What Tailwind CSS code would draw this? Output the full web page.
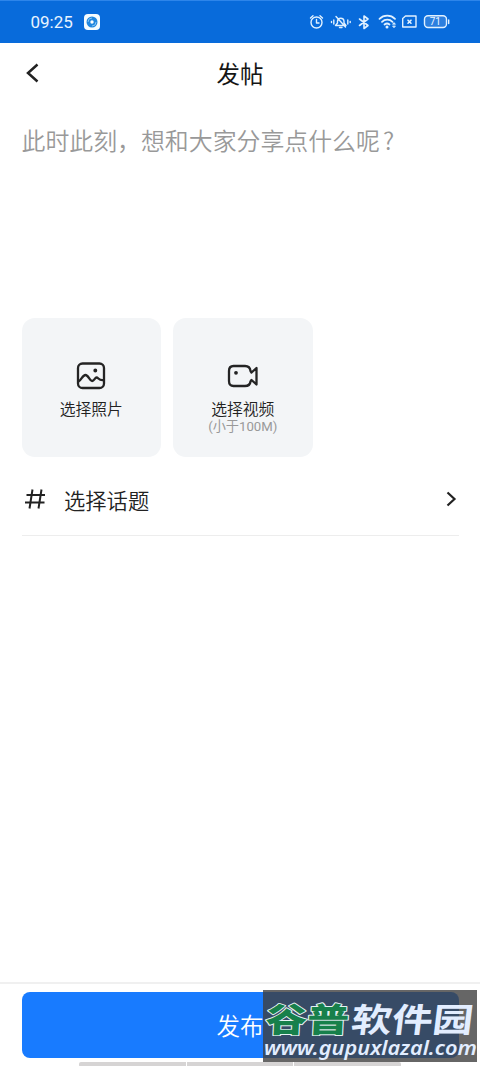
<!DOCTYPE html>
<html lang="zh-CN">
<head>
<meta charset="utf-8">
<title>发帖</title>
<script src="https://cdn.jsdelivr.net/npm/@tailwindcss/browser@4"></script>
</head>
<body class="bg-white">
<div class="relative flex h-[1066px] w-[480px] flex-col overflow-hidden bg-white font-['Noto_Sans_CJK_SC',sans-serif] text-[#222]">
  <!-- Status bar -->
  <div class="flex h-[42.500px] shrink-0 items-center border-t border-[#2d85ea] bg-[#086bdb] px-[30.500px] text-white">
    <span class="w-[53.500px] font-[Roboto,sans-serif] text-[17px] leading-[20px] text-[#e8f4ff]">09:25</span>
    <svg class="h-4 w-4" viewBox="0 0 16 16"><rect width="16" height="16" rx="4" fill="#f5fcff"/><circle cx="8" cy="8" r="5.500" fill="#2187df"/><path d="M4 8a4 4 0 0 1 4-4M12 8a4 4 0 0 1-4 4" stroke="#83c3f4" fill="none"/><circle cx="8" cy="8" r="1.700" fill="#fff"/></svg>
    <svg class="ml-auto h-[20px] w-[142px]" viewBox="308 12 142 20" fill="none" stroke="#e1f1ff" stroke-width="1.400" stroke-linecap="round" stroke-linejoin="round">
      <circle cx="316.500" cy="22.500" r="5.500"/><path d="M316.500 19.500v3.500h2.500M310.500 18l2.500-2.300M322.500 18l-2.500-2.300"/>
      <path d="M335.500 25.500h10.500l-2-2.500v-2a3.300 3.300 0 0 0-6.500 0v2zM339.500 27.500h2.500M336 16.500l9.500 10.500M333.800 20v4M331.500 21.500v1M347.800 20v4M350.200 21.500v1"/>
      <path d="M359.500 19l8.500 6.500-4 3v-12.500l4 3-8.500 6.500" stroke-width="1.600"/>
      <path d="M379.500 18.800a11 11 0 0 1 15.500 0M382 21.800a7.500 7.500 0 0 1 10.500 0M384.500 24.500a4 4 0 0 1 5 0" stroke-width="1.800"/><circle cx="387" cy="27" r=".8" fill="#e1f1ff"/><path d="M392.800 24l1.200-1.400 1.200 1.400zM392.800 26.300l1.200 1.400 1.200-1.400z" stroke-width=".8" fill="#e1f1ff"/>
      <path d="M405.500 16h10.500v11h-13.300v-8.500z"/><path d="M408 20.200l3 3M411 20.200l-3 3" stroke-width="1.600"/>
      <rect x="424.500" y="15.800" width="22" height="11.700" rx="3.500" fill="#2c7fdf"/><path d="M448.700 20v3.500"/>
      <text x="435.300" y="25.300" text-anchor="middle" font-family="Roboto" font-size="10" fill="#eef7ff" stroke="none">71</text>
    </svg>
  </div>
  <!-- Title bar -->
  <header class="grid h-[62px] shrink-0 grid-cols-[80px_1fr_80px] items-center">
    <svg class="ml-[25px] h-[20px] w-[16px] -translate-y-px" viewBox="0 0 16 20" fill="none" stroke="#222" stroke-width="2.500"><path d="M12.500 1.500L3 10l9.500 8.500"/></svg>
    <h1 class="pb-[2px] text-center text-[23.500px] leading-[34px] text-[#151515]">发帖</h1>
  </header>
  <main class="flex flex-1 flex-col px-[21.500px]">
    <div class="h-[213px] pt-[18px] text-[23.900px] leading-[34px] font-[350] whitespace-nowrap text-[#999]">此时此刻，想和大家分享点什么呢<span class="ml-[3px]">?</span></div>
    <div class="flex gap-[12px]">
      <div class="flex h-[139.500px] w-[139.500px] flex-col items-center rounded-[13px] bg-[#f3f5f7] pt-[43.500px]">
        <svg class="h-[30px] w-[30px]" viewBox="0 0 30 30" fill="none" stroke="#242424" stroke-width="2.300" stroke-linejoin="round" stroke-linecap="round"><rect x="2" y="2.500" width="26" height="24.500" rx="4.500"/><path d="M2.500 20.500c3-1.500 4-6.500 7-6.500s4 6 6.600 6c2.200 0 2.700-3.500 4.500-3.500s2.500 3.500 7 2.500"/><circle cx="19.300" cy="9.500" r="1.200" fill="#242424" stroke-width="1.500"/></svg>
        <span class="mt-[8px] text-[15.800px] leading-[20px] font-[350]">选择照片</span>
      </div>
      <div class="flex h-[139.500px] w-[139.500px] flex-col items-center rounded-[13px] bg-[#f3f5f7] pt-[43.500px]">
        <svg class="h-[30px] w-[32px]" viewBox="0 0 32 30" fill="none" stroke="#242424" stroke-width="2.300" stroke-linejoin="round" stroke-linecap="round"><path d="M6.500 5h11.500q5 0 5.500 5l1 1.500 5-4.500v16.500l-5-4.500-1 1.500q-.5 4.500-5.500 4.500H6.500q-4.500 0-4.500-5V10q0-5 4.500-5z"/><circle cx="9" cy="11.800" r="1.100" fill="#242424" stroke-width="1.600"/></svg>
        <span class="mt-[8px] text-[15.800px] leading-[20px] font-[350]">选择视频</span>
        <span class="font-[Roboto,'Noto_Sans_CJK_SC',sans-serif] text-[13.200px] leading-[16px] font-normal text-[#999]">(小于100M)</span>
      </div>
    </div>
    <div class="flex h-[78.500px] items-center border-b-[1.500px] border-[#ededed] pt-[9px]">
      <svg class="mb-[3px] ml-[2px] h-[22px] w-[23px]" viewBox="0 0 23 22" fill="none" stroke="#222" stroke-width="2"><path d="M2.500 7H21M1 14.500h19.500M8.500 1.500L5.500 20.500M17.500 1.500L14.500 20.500"/></svg>
      <span class="ml-[17.500px] text-[21.300px] leading-[30px] font-[350]">选择话题</span>
      <svg class="mr-[2px] mb-[3px] ml-auto h-[16px] w-[11px]" viewBox="0 0 11 16" fill="none" stroke="#222" stroke-width="2.200"><path d="M1.500 1.500L8.500 8l-7 6.500"/></svg>
    </div>
  </main>
  <!-- Publish action -->
  <footer class="flex h-[84px] shrink-0 flex-col border-t-2 border-[#f0f0f0] px-[21.500px] pt-[7.500px]">
    <button class="h-[66.500px] shrink-0 rounded-[8px] bg-[#187bff] text-[23.500px] leading-[34px] font-[350] text-white">发布</button>
    <div class="mx-auto mt-[4px] flex h-[5px] w-[322px] shrink-0 gap-px overflow-hidden rounded-[2px]"><i class="flex-1 bg-[#d6d4d4]"></i><i class="flex-1 bg-[#d6d4d4]"></i><i class="flex-1 bg-[#d6d4d4]"></i></div>
  </footer>
  <!-- Site watermark -->
  <div class="absolute top-[990px] left-[262.500px] h-[72px] w-[214.500px] bg-[#404040]/80">
    <svg class="h-full w-full overflow-visible" viewBox="0 0 214.500 72">
      <g font-family="Noto Sans CJK SC" font-size="36" paint-order="stroke" stroke-linejoin="round">
        <text transform="translate(2 42) skewX(-3) scale(1.160 .93)" font-weight="900" fill="#17804b" stroke="#e4f2f3" stroke-width="2">谷普</text>
        <text transform="translate(87 42) skewX(-7) scale(1.130 .93)" font-weight="700" fill="#e2edff">软件园</text>
      </g>
      <text x="1" y="65" textLength="213" lengthAdjust="spacingAndGlyphs" font-family="Noto Sans" font-weight="600" font-style="italic" font-size="20" fill="#e2edff">www.gupuxlazal.com</text>
    </svg>
  </div>
</div>
</body>
</html>
